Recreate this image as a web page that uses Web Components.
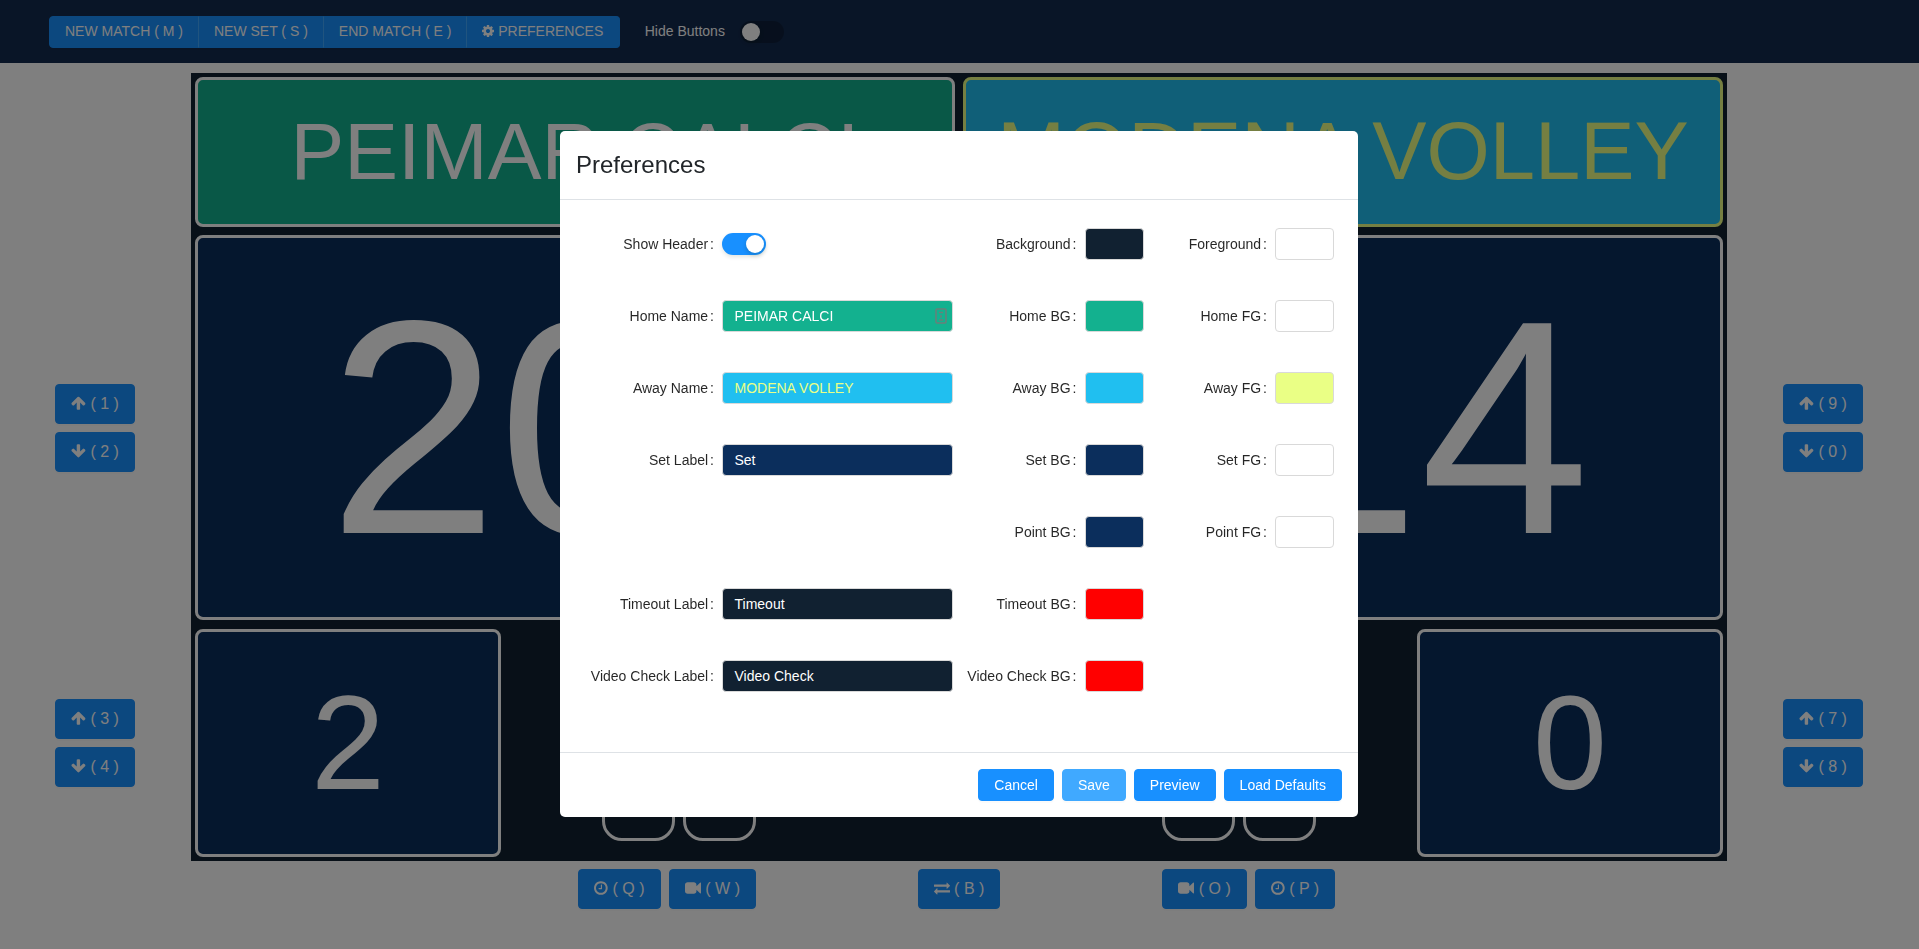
<!DOCTYPE html>
<html lang="en">
<head>
<meta charset="utf-8">
<title>Scoreboard</title>
<style>
  html, body { margin: 0; height: 100%; background: #fff; overflow: hidden; }
  body { font: 14px/1.5 "Liberation Sans", Arial, sans-serif; color: rgba(0,0,0,.85); }
</style>
</head>
<body>
<score-app>
  <app-header slot="header"></app-header>

  <side-controls slot="left" style="padding-right:1px">
    <ui-button size="lg" icon="up" block>( 1 )</ui-button>
    <ui-button size="lg" icon="down" block>( 2 )</ui-button>
    <ui-button size="lg" icon="up" block>( 3 )</ui-button>
    <ui-button size="lg" icon="down" block>( 4 )</ui-button>
  </side-controls>

  <score-board slot="board"></score-board>

  <side-controls slot="right">
    <ui-button size="lg" icon="up" block>( 9 )</ui-button>
    <ui-button size="lg" icon="down" block>( 0 )</ui-button>
    <ui-button size="lg" icon="up" block>( 7 )</ui-button>
    <ui-button size="lg" icon="down" block>( 8 )</ui-button>
  </side-controls>

  <bottom-controls slot="bottom"></bottom-controls>
</score-app>

<pref-modal></pref-modal>

<script>
const ICONS = {
  up:    ['64 0 1664 1792', 'M1675 971q0 51-37 90l-75 75q-38 38-91 38-54 0-90-38l-294-293v704q0 52-37.5 84.5t-90.5 32.5h-128q-53 0-90.5-32.5t-37.5-84.5v-704l-294 293q-36 38-90 38t-90-38l-75-75q-38-38-38-90 0-53 38-91l651-651q35-37 90-37 54 0 91 37l651 651q37 39 37 91z'],
  down:  ['64 0 1664 1792', 'M1675 832q0 53-37 90l-651 652q-39 37-91 37-53 0-90-37l-651-652q-38-36-38-90 0-53 38-91l74-75q39-37 91-37 53 0 90 37l294 294v-704q0-52 38-90t90-38h128q52 0 90 38t38 90v704l294-294q37-37 90-37 52 0 91 37l75 75q37 39 37 91z'],
  clock: ['128 0 1536 1792', 'M1024 544v448q0 14-9 23t-23 9h-320q-14 0-23-9t-9-23v-64q0-14 9-23t23-9h224v-352q0-14 9-23t23-9h64q14 0 23 9t9 23zm416 352q0-148-73-273t-198-198-273-73-273 73-198 198-73 273 73 273 198 198 273 73 273-73 198-198 73-273zm224 0q0 209-103 385.5t-279.5 279.5-385.5 103-385.5-103-279.5-279.5-103-385.5 103-385.5 279.5-279.5 385.5-103 385.5 103 279.5 279.5 103 385.5z'],
  video: ['0 0 1792 1792', 'M1792 352v1088q0 42-39 59-13 5-25 5-27 0-45-19l-403-403v166q0 119-84.5 203.5t-203.5 84.5h-704q-119 0-203.5-84.5t-84.5-203.5v-704q0-119 84.5-203.5t203.5-84.5h704q119 0 203.5 84.5t84.5 203.5v165l403-402q18-19 45-19 12 0 25 5 39 17 39 59z'],
  swap:  ['0 0 1792 1792', 'M1792 1184v192q0 13-9.5 22.5t-22.5 9.5h-1376v192q0 13-9.5 22.5t-22.5 9.5q-12 0-24-10l-319-320q-9-9-9-22 0-14 9-23l320-320q9-9 23-9 13 0 22.5 9.5t9.5 22.5v192h1376q13 0 22.5 9.5t9.5 22.5zm0-544q0 14-9 23l-320 320q-9 9-23 9-13 0-22.5-9.5t-9.5-22.5v-192h-1376q-13 0-22.5-9.5t-9.5-22.5v-192q0-13 9.5-22.5t22.5-9.5h1376v-192q0-14 9-23t23-9q12 0 24 10l319 319q9 9 9 23z'],
  cog:   ['128 0 1536 1792', 'M1152 896q0-106-75-181t-181-75-181 75-75 181 75 181 181 75 181-75 75-181zm512-109v222q0 12-8 23t-20 13l-185 28q-19 54-39 91 35 50 107 138 10 12 10 25t-9 23q-27 37-99 108t-94 71q-12 0-26-9l-138-108q-44 23-91 38-16 136-29 186-7 28-36 28h-222q-14 0-24.5-8.5t-11.5-21.5l-28-184q-49-16-90-37l-141 107q-10 9-25 9-14 0-25-11-126-114-165-168-7-10-7-23 0-12 8-23 15-21 51-66.5t54-70.5q-27-50-41-99l-183-27q-13-2-21-12.5t-8-23.5v-222q0-12 8-23t19-13l186-28q14-46 39-92-40-57-107-138-10-12-10-24 0-10 9-23 26-36 98.5-107.5t94.5-71.5q13 0 26 10l138 107q44-23 91-38 16-136 29-186 7-28 36-28h222q14 0 24.5 8.5t11.5 21.5l28 184q49 16 90 37l142-107q9-9 24-9 13 0 25 10 129 119 165 170 7 8 7 22 0 12-8 23-15 21-51 66.5t-54 70.5q26 50 41 98l183 28q13 2 21 12.5t8 23.5z']
};

function define(name, css, html, init) {
  customElements.define(name, class extends HTMLElement {
    constructor() {
      super();
      this.attachShadow({ mode: 'open' });
    }
    connectedCallback() {
      if (this.shadowRoot.childElementCount) return;
      const body = typeof html === 'function' ? html(this) : html;
      this.shadowRoot.innerHTML = `<style>${css}</style>${body}`;
      if (init) init(this);
    }
  });
}

define('fa-icon', `
  :host { display: inline-block; height: 1em; vertical-align: -.125em; line-height: 0; }
  svg { height: 1em; display: block; fill: currentColor; }
`, el => {
  const [vb, d] = ICONS[el.getAttribute('name')];
  const [, , w, h] = vb.split(' ').map(Number);
  return `<svg viewBox="${vb}" style="width:${w / h}em" aria-hidden="true"><path d="${d}"/></svg>`;
});

define('ui-button', `
  :host { display: inline-block; }
  .b {
    box-sizing: border-box; display: block; height: 32px; line-height: 30px; padding: 0 15px;
    font-size: 14px; white-space: nowrap; text-align: center; color: #fff; background: #1890ff;
    border: 1px solid #1890ff; border-radius: 4px; box-shadow: 0 2px 0 rgba(0,0,0,.015);
  }
  :host([size=lg]) .b { height: 40px; line-height: 38px; font-size: 16px; }
  :host([tone=light]) .b { background: #40a9ff; border-color: #40a9ff; }
  :host([seg]) .b { line-height: 28px; }
  :host([seg=first]) .b { border-radius: 4px 0 0 4px; }
  :host([seg=mid]) .b { border-radius: 0; border-left-color: #40a9ff; }
  :host([seg=last]) .b { border-radius: 0 4px 4px 0; border-left-color: #40a9ff; padding-right: 16px; }
  :host([seg=mid]), :host([seg=last]) { margin-left: -1px; }
`, el => {
  const ic = el.getAttribute('icon');
  return `<div class="b">${ic ? `<fa-icon name="${ic}"></fa-icon> ` : ''}<slot></slot></div>`;
});

define('ui-switch', `
  :host { display: inline-block; width: 44px; height: 22px; position: relative; border-radius: 11px;
    background: rgba(0,0,0,.25); }
  :host([on]) { background: #1890ff; box-shadow: 0 2px 4px rgba(0,35,11,.12); }
  i { position: absolute; top: 2px; left: 2px; width: 18px; height: 18px; border-radius: 50%;
    background: #fff; box-shadow: 0 2px 4px rgba(0,35,11,.2); }
  :host([on]) i { left: 24px; }
`, `<i></i>`);

define('app-header', `
  :host { display: flex; align-items: flex-start; height: 63px; box-sizing: border-box; padding: 16px 0 0 49px;
    background: #132a4e; color: #fff; }
  .group { display: flex; }
  .label { margin: -1px 15.5px 0 24.5px; font-size: 14px; line-height: 32px; height: 32px; }
  ui-switch { margin-top: 5px; }
`, `
  <div class="group">
    <ui-button seg="first">NEW MATCH ( M )</ui-button>
    <ui-button seg="mid">NEW SET ( S )</ui-button>
    <ui-button seg="mid">END MATCH ( E )</ui-button>
    <ui-button seg="last" icon="cog">PREFERENCES</ui-button>
  </div>
  <span class="label">Hide Buttons</span>
  <ui-switch></ui-switch>
`);

define('score-panel', `
  :host { display: flex; align-items: center; justify-content: center; box-sizing: border-box; min-width: 0;
    border: 3px solid var(--fg, #fff); border-radius: 8px; color: var(--fg, #fff);
    background: var(--bg, #0b2e5c); overflow: hidden; white-space: nowrap; line-height: 1; }
  :host([kind=name]) { font-size: var(--fs, 81.3px); padding-bottom: 2px; }
  :host([kind=point]) { font-size: 305px; }
  :host([kind=point][side=home]) { padding-right: 154px; }
  :host([kind=point][side=away]) { padding-left: 154px; }
  :host([kind=set]) { font-size: 133px; }
`, `<slot></slot>`);

define('score-board', `
  :host { display: grid; box-sizing: border-box; height: 788px; padding: 4px; background: #112131;
    grid-template-columns: 760px 760px; column-gap: 8px; grid-template-rows: 150px 385px 229px; row-gap: 8px; }
  .r3 { margin-top: 1px; grid-column: 1 / 3; display: grid; grid-template-columns: 306px 1fr 306px; column-gap: 8px; }
  .mid { display: grid; grid-template-columns: 1fr 406px 1fr; align-items: end; padding-bottom: 16px; }
  .boxes { display: flex; gap: 8px; }
  .boxes.l { justify-content: flex-end; grid-column: 1; }
  .boxes.r { justify-content: flex-start; grid-column: 3; }
  .boxes i { display: block; width: 73px; height: 72px; box-sizing: border-box; border: 3px solid #fff; border-radius: 20px; }
`, `
  <score-panel kind="name" style="--bg:#13b18f;--fg:#fff;--fs:80.6px">PEIMAR CALCI</score-panel>
  <score-panel kind="name" style="--bg:#20bff0;--fg:#eaff85">MODENA VOLLEY</score-panel>
  <score-panel kind="point" side="home">20</score-panel>
  <score-panel kind="point" side="away">14</score-panel>
  <div class="r3">
    <score-panel kind="set">2</score-panel>
    <div class="mid">
      <div class="boxes l"><i></i><i></i></div>
      <div class="boxes r"><i></i><i></i></div>
    </div>
    <score-panel kind="set">0</score-panel>
  </div>
`);

define('side-controls', `
  :host { display: flex; flex-direction: column; align-items: center; padding-top: 311px; }
  ::slotted(ui-button) { width: 80px; margin-bottom: 8px; }
  ::slotted(ui-button:nth-child(2)) { margin-bottom: 227px; }
`, `<slot></slot>`);

define('bottom-controls', `
  :host { display: grid; grid-template-columns: 1fr 406px 1fr; margin-top: 8px; }
  .g { display: flex; gap: 8px; }
  .l { justify-content: flex-end; }
  .m { justify-content: center; }
`, `
  <div class="g l"><ui-button size="lg" icon="clock" style="width:83px">( Q )</ui-button><ui-button size="lg" icon="video">( W )</ui-button></div>
  <div class="g m"><ui-button size="lg" icon="swap">( B )</ui-button></div>
  <div class="g"><ui-button size="lg" icon="video" style="width:85px">( O )</ui-button><ui-button size="lg" icon="clock" style="width:80px">( P )</ui-button></div>
`);

define('score-app', `
  :host { display: grid; grid-template-columns: 191px 1536px 192px; grid-template-rows: 63px auto auto; }
  .h { grid-column: 1 / 4; }
  .b { margin-top: 10px; }
  .s { margin-top: 10px; }
  .t { grid-column: 2; }
`, `
  <div class="h"><slot name="header"></slot></div>
  <div class="s"><slot name="left"></slot></div>
  <div class="b"><slot name="board"></slot></div>
  <div class="s"><slot name="right"></slot></div>
  <div class="t"><slot name="bottom"></slot></div>
`);

define('pref-field', `
  :host { display: grid; grid-template-columns: var(--lw, 132.5px) var(--cw, 59.5px); align-items: center; height: 32px; }
  :host(.c3) { --lw: 131.5px; --cw: 59px; }
  label { display: block; text-align: right; padding-right: 8px; white-space: nowrap; font-size: 14px; color: rgba(0,0,0,.85); }
  label span { margin-left: 2px; }
  .c { position: relative; box-sizing: border-box; height: 32px; border: 1px solid #d9d9d9; border-radius: 4px;
    padding: 0 11px 0 11.5px; line-height: 30px; font-size: 14px; white-space: nowrap; }
  .sw { height: 22px; display: flex; }
  svg { position: absolute; right: 5px; top: 7px; }
`, el => {
  const type = el.getAttribute('type') || 'color';
  const bg = el.getAttribute('bg') || '#fff', fg = el.getAttribute('fg') || '#fff';
  let ctl;
  if (type === 'switch') ctl = `<div class="sw"><ui-switch on></ui-switch></div>`;
  else if (type === 'text') ctl = `<div class="c" style="background:${bg};color:${fg}">${el.getAttribute('value')}${el.hasAttribute('lock') ?
    `<svg width="12" height="16" viewBox="0 0 12 16" fill="none" stroke="#6b7f7a"><rect x="1" y="1" width="10" height="14" rx="1" stroke-width="1.5"/><path d="M4 4.5h4M6 7v3M4 12h4" stroke-width="1.3"/></svg>` : ''}</div>`;
  else ctl = `<div class="c" style="background:${bg}"></div>`;
  return `<label>${el.getAttribute('label')}<span>:</span></label>${ctl}`;
});

define('pref-modal', `
  :host { position: fixed; inset: 0; background: rgba(0,0,0,.5); display: block; box-sizing: border-box; padding: 131px 0 0 560px; }
  .m { width: 798px; background: #fff; border-radius: 5px; overflow: hidden; color: #212529; }
  header { box-sizing: border-box; padding: 16px; border-bottom: 1px solid #dee2e6; height: 69px; }
  h2 { margin: 0; font-weight: 400; font-size: 24px; line-height: 36px; }
  .body { display: grid; grid-template-columns: 392px 191.5px 190.5px; row-gap: 40px; padding: 28px 0 60px; box-sizing: border-box; height: 552px; grid-auto-rows: 32px; }
  .wide { --lw: 162px; --cw: 231px; }
  footer { border-top: 1px solid #dee2e6; padding: 16px; display: flex; justify-content: flex-end; gap: 8px; }
`, `
  <div class="m">
    <header><h2>Preferences</h2></header>
    <div class="body">
      <pref-field class="wide" type="switch" label="Show Header"></pref-field>
      <pref-field label="Background" bg="#112131"></pref-field>
      <pref-field class="c3" label="Foreground" bg="#fff"></pref-field>

      <pref-field class="wide" type="text" lock label="Home Name" value="PEIMAR CALCI" bg="#13b18f" fg="#fff"></pref-field>
      <pref-field label="Home BG" bg="#13b18f"></pref-field>
      <pref-field class="c3" label="Home FG" bg="#fff"></pref-field>

      <pref-field class="wide" type="text" label="Away Name" value="MODENA VOLLEY" bg="#20bff0" fg="#eaff85"></pref-field>
      <pref-field label="Away BG" bg="#20bff0"></pref-field>
      <pref-field class="c3" label="Away FG" bg="#eaff85"></pref-field>

      <pref-field class="wide" type="text" label="Set Label" value="Set" bg="#0b2e5c" fg="#fff"></pref-field>
      <pref-field label="Set BG" bg="#0b2e5c"></pref-field>
      <pref-field class="c3" label="Set FG" bg="#fff"></pref-field>

      <div></div>
      <pref-field label="Point BG" bg="#0b2e5c"></pref-field>
      <pref-field class="c3" label="Point FG" bg="#fff"></pref-field>

      <pref-field class="wide" type="text" label="Timeout Label" value="Timeout" bg="#112131" fg="#fff"></pref-field>
      <pref-field label="Timeout BG" bg="#ff0000"></pref-field>
      <div></div>

      <pref-field class="wide" type="text" label="Video Check Label" value="Video Check" bg="#112131" fg="#fff"></pref-field>
      <pref-field label="Video Check BG" bg="#ff0000"></pref-field>
      <div></div>
    </div>
    <footer>
      <ui-button>Cancel</ui-button>
      <ui-button tone="light">Save</ui-button>
      <ui-button>Preview</ui-button>
      <ui-button>Load Defaults</ui-button>
    </footer>
  </div>
`);
</script>
</body>
</html>
